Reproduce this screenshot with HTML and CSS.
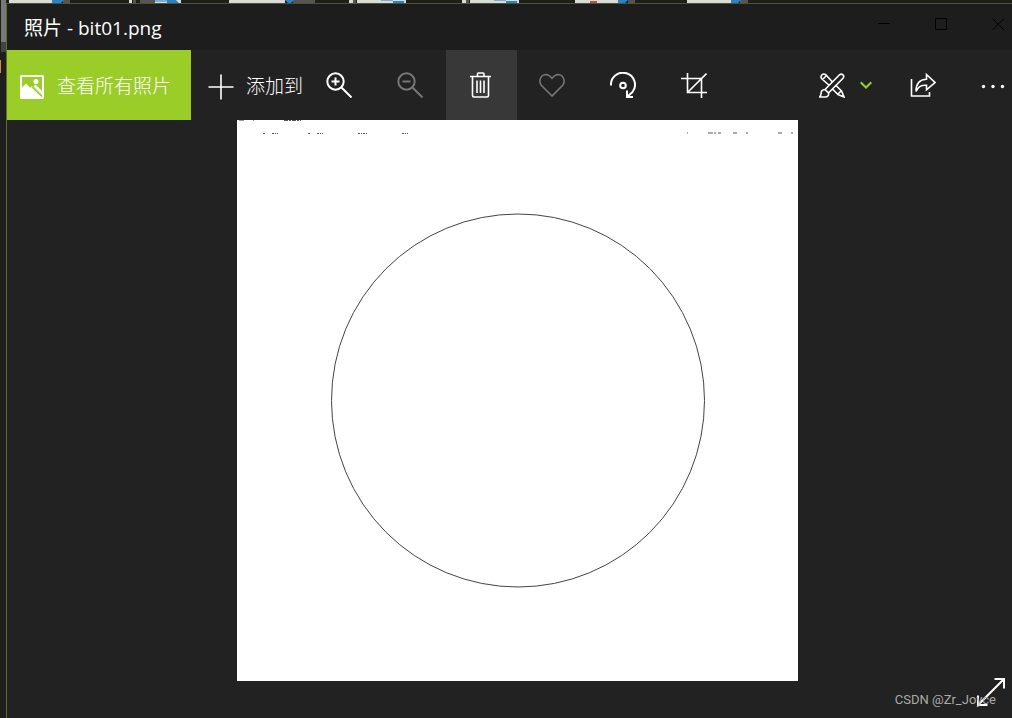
FILE: index.html
```html
<!DOCTYPE html>
<html lang="zh-CN">
<head>
<meta charset="utf-8">
<meta name="viewport" content="width=device-width, initial-scale=1">
<title>照片 - bit01.png</title>
<link rel="stylesheet" href="styles.css">
</head>
<body>
<div class="desktop">
  <svg class="backdrop" width="1012" height="73" viewBox="0 0 1012 73" aria-hidden="true">
    <path fill="#77787a" d="M1 0h5v42h-5z"/><path fill="#444" d="M1 42h5v10h-5z"/>
    <path fill="#d58b42" d="M0 60h1v13h-1z"/>
    <path fill="#d9dadb" d="M9 0h44v3H9zM129 0h3v3h-3zM181 0h-26v3h26zM229 0h56v3h-56zM349 0h4v3h-4zM357 0h49v3h-49zM462 0h4v3h-4zM470 0h49v3h-49zM575 0h43v3h-43zM687 0h44v3h-44z"/>
    <path fill="#555" d="M63 0h7v3h-7zM133 0h3v3h-3zM140 0h15v3h-15zM353 0h3v3h-3zM466 0h3v3h-3zM293 0h22v3h-22zM628 0h7v3h-7zM740 0h8v3h-8z"/>
    <path fill="#77acd9" d="M155 0h15v2h-15zM381 0h12v1h-12zM494 0h12v1h-12z"/>
    <path fill="#2b82c7" d="M52 0h12l-3 3h-9zM167 0h9l3 3h-12zM285 0h9l-3 3h-3zM393 1h11v2h-11zM506 1h11v2h-11zM618 0h10l-3 3h-7zM731 0h10l-3 3h-7z"/>
    <path fill="#b35252" d="M590 1h7v2h-7z"/>
  </svg>
  <main class="window">
    <header class="titlebar">
      <h1 class="title">照片 - bit01.png</h1>
      <div class="captions">
        <button class="caption" type="button" aria-label="最小化"><svg width="13" height="13" viewBox="0 0 13 13"><path d="M0 5.500h12"/></svg></button>
        <button class="caption" type="button" aria-label="最大化"><svg width="13" height="13" viewBox="0 0 13 13"><path d="M.5.500h11v11H.5z"/></svg></button>
        <button class="caption" type="button" aria-label="关闭"><svg width="13" height="13" viewBox="0 0 13 13"><path d="M.5.500l11.500 11.500M12 .5L.5 12"/></svg></button>
      </div>
    </header>
    <nav class="toolbar">
      <button class="tool all-photos" type="button">
        <svg width="24" height="24" viewBox="0 0 24 24"><path fill="#fff" fill-rule="evenodd" d="M1.500 0h21A1.500 1.500 0 0 1 24 1.500v21a1.500 1.500 0 0 1-1.500 1.500h-21A1.500 1.500 0 0 1 0 22.500v-21A1.500 1.500 0 0 1 1.500 0zM2 2v10.500l4-4 4.300 4.300 1.700-1.600 10 9.800V2z"/><circle cx="16" cy="6.500" r="2.500" fill="#fff"/><path d="M12 12l10 9.500" stroke="#9acd27" stroke-width="1.400"/><path fill="#fff" d="M13.500 11.500l2-2 6.500 6.500v4z"/></svg>
        <span>查看所有照片</span>
      </button>
      <button class="tool add" type="button">
        <svg width="26" height="26" viewBox="0 0 26 26"><path d="M13 .5v25M.5 13h25"/></svg>
        <span>添加到</span>
      </button>
      <button class="tool command" type="button" aria-label="放大"><svg class="bold" width="26" height="26" viewBox="0 0 26 26"><circle cx="9.500" cy="9.500" r="8.200"/><path d="M5.500 9.500h8M9.500 5.500v8M15.500 15.500l10 10"/></svg></button>
      <button class="tool command dim" type="button" aria-label="缩小"><svg class="bold" width="26" height="26" viewBox="0 0 26 26"><circle cx="9.500" cy="9.500" r="8.200"/><path d="M5.500 9.500h8M15.500 15.500l10 10"/></svg></button>
      <button class="tool command active" type="button" aria-label="删除"><svg width="26" height="26" viewBox="0 0 26 26"><path d="M2 4.500h21M9.500 4V2q0-1 1-1h4.500q1 0 1 1v2M4.500 5v18.500q0 1.500 1.500 1.500h13q1.500 0 1.500-1.500V5M9 8.500v12.500M12.500 8.500v12.500M16 8.500v12.500"/></svg></button>
      <button class="tool command dim" type="button" aria-label="收藏"><svg width="26" height="26" viewBox="0 0 26 26"><path d="M13 24L2.500 13.500C-.5 10 .8 3 6.800 2.500c3 0 4.200 1.500 6.200 3.800 2-2.300 3.200-3.800 6.200-3.800 6 .5 7.300 7.500 4.300 11z"/></svg></button>
      <button class="tool command" type="button" aria-label="旋转"><svg class="bold" width="26" height="26" viewBox="0 0 26 26"><path d="M1 13.500a12 12 0 1 1 21.500 6.500l-5 4.500M17 18.500V25h6"/><circle cx="13" cy="13.500" r="2.800"/></svg></button>
      <button class="tool command" type="button" aria-label="裁剪"><svg width="26" height="26" viewBox="0 0 26 26"><path d="M0 6.500h20.500V26M6.500 1v19.500H26M6.500 20.500L25.500 1.500"/></svg></button>
      <div class="right-tools">
        <button class="tool edit" type="button" aria-label="编辑和创建"><svg width="26" height="26" viewBox="0 0 26 26"><path d="M9.800 13L2.500 6.500C1 4 3.500 1 6.500 2.500L13 9.500M3.500 7.500L7.500 3.500M16.500 13l6 6 2.500 6-6-2.500-6-6M18.500 22.500l4-4M6 17.500L20.500 2.800c2.500-2 5.500 1 3.500 3.500L9.500 21M6 17.500c-3 0-4 2-4 4.500 0 1.500-.5 2-1.500 3H6c3 0 4-2 3.500-4z"/></svg></button>
        <button class="tool more-edit" type="button" aria-label="更多编辑选项"><svg class="bold" width="12" height="8" viewBox="0 0 12 8"><path d="M.7 1.200L6 6.500l5.300-5.300"/></svg></button>
        <button class="tool" type="button" aria-label="共享"><svg width="26" height="26" viewBox="0 0 26 26"><path d="M1.500 7v17h18v-4M6 19.500C6 11.500 9 7.500 16.500 7.200V2.500L25 10.500l-8.500 7.300v-4.500C11 13 8.500 14.500 6 19.500z"/></svg></button>
        <button class="tool more" type="button" aria-label="查看更多"><svg width="24" height="26" viewBox="0 0 24 26"><g fill="#fff" stroke="none"><circle cx="2.500" cy="14.500" r="1.700"/><circle cx="12" cy="14.500" r="1.700"/><circle cx="21.500" cy="14.500" r="1.700"/></g></svg></button>
      </div>
    </nav>
    <section class="viewer">
      <svg class="photo" viewBox="0 0 561 561" role="img" aria-label="bit01.png">
        <path fill="#fff" d="M0 0h561v561H0z"/>
        <circle cx="281" cy="280.500" r="186.500" fill="none" stroke="#444" stroke-width="1"/>
        <g fill="none" stroke="#555" stroke-width="1">
          <path stroke-dasharray="4 1 2 1" d="M47 .5h17"/><path stroke="#999" d="M2 .5h5M16 .5h1"/>
          <path stroke-dasharray="2 1 1 1" d="M26 13.500h2M35 13.500h6M71 13.500h2M80 13.500h6M121 13.500h10M165 13.500h6"/>
          <path stroke="#aaa" stroke-width="2" d="M450 13h1M471 13h5M477 13h2M481 13h3M496 13h4M509 13h2M541 13h4M554 13h2"/>
        </g>
      </svg>
      <button class="fullscreen" type="button" aria-label="全屏"><svg width="28" height="28" viewBox="0 0 28 28"><path d="M1 27L27 1M17.500 1H27v9.500M1 17.500V27h9.500"/></svg></button>
      <span class="watermark">CSDN @Zr_Joyce</span>
    </section>
  </main>
</div>
</body>
</html>
```
FILE: styles.css
```css
* { box-sizing: border-box; }
body {
  margin: 0;
  background: #1e1e1e;
  color: #fff;
  font-family: "Open Sans", "Noto Sans CJK SC", sans-serif;
}
.desktop {
  position: relative;
  display: flex;
  min-height: 100vh;
  padding: 3px 0 0 6px;
  overflow: hidden;
}
.backdrop { position: absolute; top: 0; left: 0; }
.window {
  position: relative;
  flex: 1;
  display: flex;
  flex-direction: column;
  min-width: 0;
  background: #222;
  border-top: 1px solid #4d5628;
  border-left: 1px solid #5b7220;
}
.titlebar {
  display: flex;
  justify-content: space-between;
  height: 46px;
  padding-left: 17px;
  background: #1d1d1d;
}
.title {
  margin: 0;
  font-size: 19px;
  font-weight: 400;
  line-height: 48px;
}
.captions { display: flex; }
.caption {
  width: 57px;
  height: 41px;
  padding: 0;
  border: 0;
  background: none;
}
.caption:last-child { width: 42px; }
.caption svg { display: block; margin: 0 auto; }
.caption:last-child svg { margin: 0 0 0 22px; }
svg { flex: none; fill: none; }
.caption path { stroke: #000; }
.toolbar { display: flex; height: 70px; }
.tool {
  display: flex;
  align-items: center;
  justify-content: center;
  width: 71px;
  height: 70px;
  padding: 0;
  border: 0;
  background: none;
  color: #fff;
  font-family: "Noto Sans CJK SC", sans-serif;
  font-size: 19px;
  font-weight: 300;
  line-height: 28px;
  white-space: nowrap;
}
.tool svg { stroke: currentColor; stroke-width: 1.6; }
.tool .bold { stroke-width: 2; }
.command { padding-right: 2px; }
.all-photos {
  justify-content: flex-start;
  width: 184px;
  gap: 13px;
  padding-left: 13px;
  background: #9acd27;
}
.all-photos svg { stroke: none; margin-top: 4px; }
.add {
  width: 113px;
  justify-content: flex-start;
  gap: 12px;
  padding-left: 17px;
}
.add svg { margin-top: 4px; }
.dim { color: #777; }
.active { background: #383838; }
.right-tools { display: flex; margin-left: auto; }
.edit { width: 57px; }
.more-edit { width: 27px; color: #9acd27; justify-content: flex-start; }
.more { width: 54px; padding-left: 15px; }
.viewer {
  position: relative;
  flex: 1;
  display: flex;
  justify-content: center;
  padding: 0 0 37px;
}
.photo { width: 56%; max-width: 561px; height: 561px; margin-left: 16px; }
.watermark {
  position: absolute;
  right: 16px;
  bottom: 9px;
  color: #aaa;
  font: 13px/18px Roboto, "Liberation Sans", sans-serif;
  pointer-events: none;
}
.fullscreen {
  position: absolute;
  right: 7px;
  bottom: 12px;
  width: 28px;
  height: 28px;
  padding: 0;
  border: 0;
  background: none;
}
.fullscreen svg { display: block; stroke: #fff; stroke-width: 2; }
```
